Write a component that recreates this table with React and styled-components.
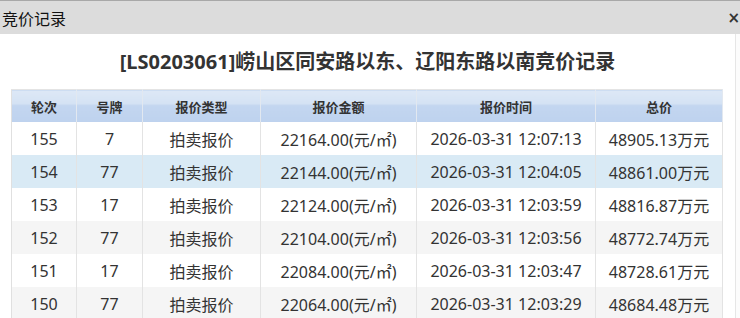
import styled, { createGlobalStyle } from "styled-components";

const columns = [
  { label: "轮次", width: 65 },
  { label: "号牌", width: 66 },
  { label: "报价类型", width: 118 },
  { label: "报价金额", width: 156 },
  { label: "报价时间", width: 179 },
  { label: "总价", width: 127 },
];

const bids = [
  { round: 155, plate: "7", price: "22164.00", time: "2026-03-31 12:07:13", total: "48905.13" },
  { round: 154, plate: "77", price: "22144.00", time: "2026-03-31 12:04:05", total: "48861.00" },
  { round: 153, plate: "17", price: "22124.00", time: "2026-03-31 12:03:59", total: "48816.87" },
  { round: 152, plate: "77", price: "22104.00", time: "2026-03-31 12:03:56", total: "48772.74" },
  { round: 151, plate: "17", price: "22084.00", time: "2026-03-31 12:03:47", total: "48728.61" },
  { round: 150, plate: "77", price: "22064.00", time: "2026-03-31 12:03:29", total: "48684.48" },
];

const GlobalStyle = createGlobalStyle`
  html, body {
    margin: 0;
    padding: 0;
    background: #fff;
  }
  body {
    font-family: "Noto Sans", "Noto Sans CJK SC", sans-serif;
    color: #333;
  }
`;

export default function App() {
  // second row is the hovered one in the screenshot
  const hovered = 1;

  return (
    <Dialog>
      <GlobalStyle />
      <TitleBar>
        <Title>竞价记录</Title>
        <Close>×</Close>
      </TitleBar>

      <Content>
        <Main>
          <Heading>[LS0203061]崂山区同安路以东、辽阳东路以南竞价记录</Heading>
          <Table>
            <colgroup>
              {columns.map((col) => (
                <col key={col.label} style={{ width: col.width }} />
              ))}
            </colgroup>
            <thead>
              <tr>
                {columns.map((col) => (
                  <Th key={col.label}>{col.label}</Th>
                ))}
              </tr>
            </thead>
            <tbody>
              {bids.map((bid, i) => (
                <Row key={bid.round} $hovered={i === hovered} $odd={i % 2 === 1}>
                  <Td>{bid.round}</Td>
                  <Td>{bid.plate}</Td>
                  <Td>拍卖报价</Td>
                  <Td>{bid.price}(元/㎡)</Td>
                  <Td>{bid.time}</Td>
                  <Td>{bid.total}万元</Td>
                </Row>
              ))}
            </tbody>
          </Table>
        </Main>
        <Scrollbar />
      </Content>
    </Dialog>
  );
}

const Dialog = styled.div`
  width: 740px;
  height: 318px;
  overflow: hidden;
  border-top: 1px solid #a8a8a8;
  box-sizing: border-box;
  display: flex;
  flex-direction: column;
`;

const TitleBar = styled.div`
  height: 33px;
  flex: none;
  background: #dcdcdc;
  display: flex;
  align-items: center;
  justify-content: space-between;
  overflow: hidden;
`;

const Title = styled.span`
  font-family: "Noto Sans CJK SC", sans-serif;
  font-size: 16px;
  color: #111;
  padding-left: 2px;
`;

const Close = styled.span`
  font-family: "DejaVu Sans", sans-serif;
  font-size: 15px;
  font-weight: bold;
  color: #333;
  margin-right: 0;
`;

const Content = styled.div`
  flex: 1;
  display: flex;
  min-height: 0;
`;

const Main = styled.div`
  width: 735px;
  flex: none;
  padding-left: 11px;
  box-sizing: border-box;
`;

const Scrollbar = styled.div`
  flex: 1;
  border-left: 1px solid #e6e6e6;
  background: #fcfcfc;
`;

const Heading = styled.h1`
  margin: 0;
  height: 55px;
  line-height: 55px;
  padding-right: 11px;
  text-align: center;
  font-size: 20px;
  font-weight: bold;
  color: #333;
`;

const Table = styled.table`
  width: 711px;
  border-collapse: collapse;
  table-layout: fixed;
  border-top: 1px solid #e4e4e4;
  border-left: 1px solid #e0e0e0;
`;

const Th = styled.th`
  height: 32px;
  padding: 0;
  font-family: "Noto Sans CJK SC", sans-serif;
  font-size: 13px;
  font-weight: bold;
  color: #333;
  text-align: center;
  border-right: 1px solid #e2e8f0;
  background: linear-gradient(
    to bottom,
    #dde8f6 0%,
    #d4e2f4 42%,
    #c3d6f0 46%,
    #bed2ee 100%
  );
`;

const Row = styled.tr`
  background: ${({ $hovered, $odd }) =>
    $hovered ? "#d9eaf5" : $odd ? "#f5f5f5" : "#ffffff"};
`;

const Td = styled.td`
  height: 33px;
  padding: 0;
  font-size: 16px;
  color: #333;
  text-align: center;
  white-space: nowrap;
  border-right: 1px solid #e3e3e3;
`;
